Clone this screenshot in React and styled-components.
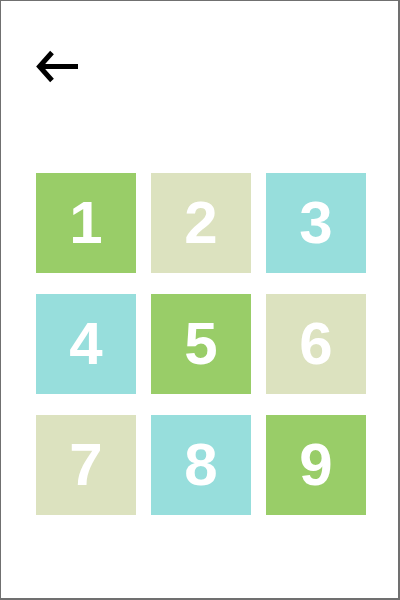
import React from 'react'
import styled, { createGlobalStyle } from 'styled-components'

const GlobalStyle = createGlobalStyle`
  html, body {
    margin: 0;
    padding: 0;
    background: #fff;
  }
`

const TILES = [
  { n: 1, tone: 'green' },
  { n: 2, tone: 'sand' },
  { n: 3, tone: 'aqua' },
  { n: 4, tone: 'aqua' },
  { n: 5, tone: 'green' },
  { n: 6, tone: 'sand' },
  { n: 7, tone: 'sand' },
  { n: 8, tone: 'aqua' },
  { n: 9, tone: 'green' },
]

const TONES = {
  green: '#99cd68',
  sand: '#dce2bf',
  aqua: '#97dedc',
}

const BackArrow = () => (
  <svg width="44" height="34" viewBox="0 0 44 34" fill="none">
    <path d="M16 3.5 L3.5 17.5 L16 31.5" stroke="#000" strokeWidth="5" />
    <path d="M4 17.5 H42" stroke="#000" strokeWidth="5" />
  </svg>
)

export default function App() {
  return (
    <>
      <GlobalStyle />
      <Frame>
        <Header>
          <BackButton type="button" aria-label="Back">
            <BackArrow />
          </BackButton>
        </Header>
        <Grid>
          {TILES.map((tile) => (
            <Tile key={tile.n} $tone={tile.tone}>{tile.n}</Tile>
          ))}
        </Grid>
      </Frame>
    </>
  )
}

const Frame = styled.div`
  box-sizing: border-box;
  width: 400px;
  height: 600px;
  border-style: solid;
  border-color: #707070;
  border-width: 1px 2px 2px 1px;
  padding: 48px 0 0 35px;
  display: flex;
  flex-direction: column;
  font-family: "Liberation Sans", Arial, sans-serif;
`

const Header = styled.div`
  display: flex;
  height: 34px;
`

const BackButton = styled.button`
  display: flex;
  padding: 0;
  margin: 0;
  border: none;
  background: none;
  cursor: pointer;
`

const Grid = styled.div`
  display: grid;
  grid-template-columns: repeat(3, 100px);
  grid-auto-rows: 100px;
  column-gap: 15px;
  row-gap: 21px;
  margin-top: 90px;
`

const Tile = styled.div`
  display: flex;
  align-items: center;
  justify-content: center;
  background: ${(p) => TONES[p.$tone]};
  color: #fff;
  font-size: 60px;
  font-weight: 700;
  line-height: 1;
`
